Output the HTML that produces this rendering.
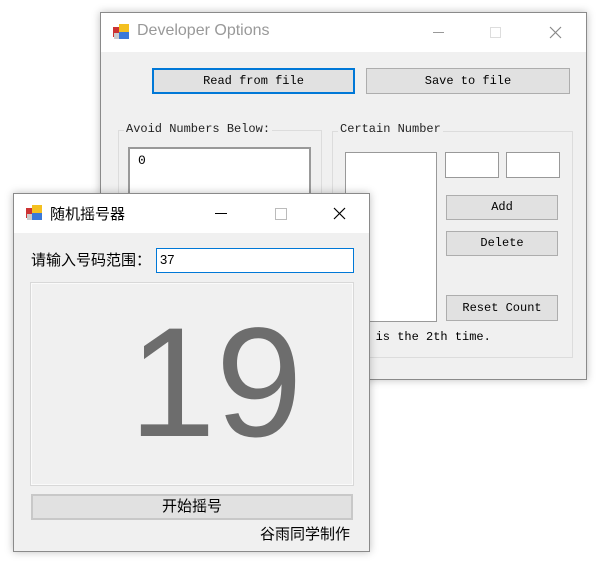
<!DOCTYPE html>
<html><head><meta charset="utf-8"><style>
*{margin:0;padding:0;box-sizing:border-box}
body{width:602px;height:561px;background:#fff;position:relative;overflow:hidden;font-family:"Liberation Mono",monospace;}
.a{position:absolute}
.win{position:absolute;background:#f0f0f0;border:1px solid #8a8a8a;box-shadow:0 0 8px rgba(0,0,0,.25)}
.tb{position:absolute;left:0;right:0;top:0;height:39px;background:#fff}
.btn{position:absolute;background:#e1e1e1;border:1px solid #adadad;text-align:center;font-size:12px;color:#000}
.box{position:absolute;background:#fff;border:1px solid #7a7a7a}
.grp{position:absolute;border:1px solid #dcdcdc}
.lg{position:absolute;background:#f0f0f0;font-size:12px;padding:0 2px;color:#222}
.ic{position:absolute;width:16px;height:16px}
.cn{font-family:"Liberation Sans","Noto Sans CJK SC",sans-serif}
</style></head><body>
<div class="win" style="left:100px;top:12px;width:487px;height:368px">
 <div class="tb"></div>
 <svg class="ic" style="left:12px;top:11px" viewBox="0 0 16 16"><rect x="0" y="3" width="7" height="10" fill="#c33"/><rect x="6" y="0" width="10" height="8" fill="#f4c020"/><rect x="6" y="8" width="10" height="7" fill="#3a78d8"/><rect x="1" y="9" width="5" height="6" fill="#ccc"/></svg>
 <div class="a cn" style="left:36px;top:9px;font-size:16px;color:#999">Developer Options</div>
 <div class="a" style="left:332px;top:19px;width:11px;height:1px;background:#999"></div>
 <div class="a" style="left:389px;top:14px;width:11px;height:11px;border:1px solid #ddd"></div>
 <svg class="a" style="left:448px;top:13px" width="13" height="13"><path d="M1 1L12 12M12 1L1 12" stroke="#888" stroke-width="1.2"/></svg>
 <div class="btn" style="left:51px;top:55px;width:203px;height:26px;border:2px solid #0078d7;line-height:22px">Read from file</div>
 <div class="btn" style="left:265px;top:55px;width:204px;height:26px;line-height:24px">Save to file</div>
 <div class="grp" style="left:17px;top:117px;width:204px;height:240px"></div>
 <div class="lg" style="left:23px;top:109px">Avoid Numbers Below:</div>
 <div class="box" style="left:27px;top:134px;width:183px;height:200px;border:2px solid #999"><div class="a" style="left:8px;top:4px;font-size:13px">0</div></div>
 <div class="grp" style="left:231px;top:118px;width:241px;height:227px"></div>
 <div class="lg" style="left:237px;top:109px">Certain Number</div>
 <div class="box" style="left:244px;top:139px;width:92px;height:170px;border-color:#999"></div>
 <div class="box" style="left:344px;top:139px;width:54px;height:26px;border-color:#999"></div>
 <div class="box" style="left:405px;top:139px;width:54px;height:26px;border-color:#999"></div>
 <div class="btn" style="left:345px;top:182px;width:112px;height:25px;line-height:23px">Add</div>
 <div class="btn" style="left:345px;top:218px;width:112px;height:25px;line-height:23px">Delete</div>
 <div class="btn" style="left:345px;top:282px;width:112px;height:26px;line-height:24px">Reset Count</div>
 <div class="a" style="left:253px;top:317px;font-size:12px;white-space:nowrap">It is the 2th time.</div>
</div>
<div class="win" style="left:13px;top:193px;width:357px;height:359px">
 <div class="tb"></div>
 <svg class="ic" style="left:12px;top:11px" viewBox="0 0 16 16"><rect x="0" y="3" width="7" height="10" fill="#c33"/><rect x="6" y="0" width="10" height="8" fill="#f4c020"/><rect x="6" y="8" width="10" height="7" fill="#3a78d8"/><rect x="1" y="9" width="5" height="6" fill="#ccc"/></svg>
 <div class="a cn" style="left:36px;top:9px;font-size:15px;color:#000">随机摇号器</div>
 <div class="a" style="left:201px;top:19px;width:12px;height:1px;background:#000"></div>
 <div class="a" style="left:261px;top:14px;width:12px;height:12px;border:1px solid #bbb"></div>
 <svg class="a" style="left:319px;top:13px" width="13" height="13"><path d="M1 1L12 12M12 1L1 12" stroke="#000" stroke-width="1.2"/></svg>
 <div class="a cn" style="left:17px;top:55px;font-size:15px;color:#000">请输入号码范围：</div>
 <div class="box" style="left:142px;top:54px;width:198px;height:25px;border-color:#0078d7"><div class="a" style="left:3px;top:3px;font-size:13px;font-family:'Liberation Sans',sans-serif">37</div></div>
 <div class="a" style="left:16px;top:88px;width:324px;height:204px;border:1px solid #d8d8d8;box-shadow:inset 0 0 0 1px #fafafa"></div>
 <div class="a" style="left:115px;top:111px;font-size:156px;line-height:1;color:#6d6d6d;font-family:'Liberation Sans',sans-serif;white-space:nowrap">19</div>
 <div class="btn cn" style="left:17px;top:300px;width:322px;height:26px;border:2px solid #c8c8c8;line-height:22px;font-size:15px">开始摇号</div>
 <div class="a cn" style="right:19px;top:329px;font-size:15px;color:#000">谷雨同学制作</div>
</div>
</body></html>
